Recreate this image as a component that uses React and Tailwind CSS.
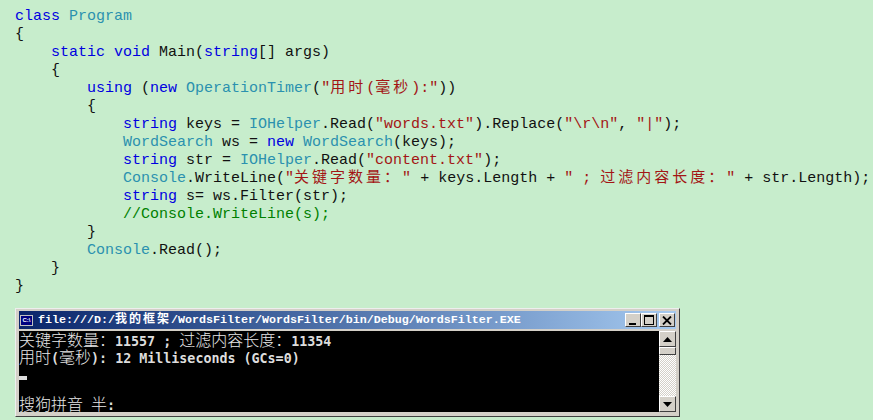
const K = ({ children }) => <span className="text-[#0000e0]">{children}</span>;
const T = ({ children }) => <span className="text-[#2b91af]">{children}</span>;
const S = ({ children }) => <span className="text-[#a31515]">{children}</span>;
const Z = ({ children }) => (
  <span className="text-[#a31515] text-[15px] leading-[0] tracking-[3px] font-['Noto_Sans_CJK_SC',sans-serif]">{children}</span>
);
const C = ({ children }) => (
  <span className="text-[16px] leading-[0] font-light text-[#e8e8e8] font-['Noto_Sans_CJK_SC',sans-serif]">{children}</span>
);
const Line = ({ children }) => <div className="h-[18px] leading-[18px] whitespace-pre">{children}</div>;

const WinBtn = ({ children, className = "" }) => (
  <div className={"w-4 h-[14px] flex items-center justify-center bg-[#d4d0c8] border border-t-white border-l-white border-r-[#404040] border-b-[#404040] " + className}>
    {children}
  </div>
);

const ScrollBtn = ({ up }) => (
  <div className="h-4 flex items-center justify-center bg-[#d4d0c8] border border-t-white border-l-white border-r-[#404040] border-b-[#404040]">
    <svg width="9" height="5" viewBox="0 0 9 5">
      <path d={up ? "M4.5 0 L9 5 L0 5 Z" : "M0 0 L9 0 L4.5 5 Z"} fill="#000" />
    </svg>
  </div>
);

export default function App() {
  return (
    <div className="w-[873px] h-[420px] overflow-hidden bg-[#c7edcc] pt-2 font-['Liberation_Mono',monospace] text-[15px] text-[#111111]">
      <div className="pl-[15px]">
        <Line><K>class</K> <T>Program</T></Line>
        <Line>{"{"}</Line>
        <Line>{"    "}<K>static</K> <K>void</K> Main(<K>string</K>[] args)</Line>
        <Line>{"    {"}</Line>
        <Line>{"        "}<K>using</K> (<K>new</K> <T>OperationTimer</T>(<S>"</S><Z>用时</Z><S>(</S><Z>毫秒</Z><S>):"</S>))</Line>
        <Line>{"        {"}</Line>
        <Line>{"            "}<K>string</K> keys = <T>IOHelper</T>.Read(<S>"words.txt"</S>).Replace(<S>"\r\n"</S>, <S>"|"</S>);</Line>
        <Line>{"            "}<T>WordSearch</T> ws = <K>new</K> <T>WordSearch</T>(keys);</Line>
        <Line>{"            "}<K>string</K> str = <T>IOHelper</T>.Read(<S>"content.txt"</S>);</Line>
        <Line>{"            "}<T>Console</T>.WriteLine(<S>"</S><Z>关键字数量：</Z><S>"</S> + keys.Length + <S>" ; </S><Z>过滤内容长度：</Z><S>"</S> + str.Length);</Line>
        <Line>{"            "}<K>string</K> s= ws.Filter(str);</Line>
        <Line>{"            "}<span className="text-[#008000]">//Console.WriteLine(s);</span></Line>
        <Line>{"        }"}</Line>
        <Line>{"        "}<T>Console</T>.Read();</Line>
        <Line>{"    }"}</Line>
        <Line>{"}"}</Line>
      </div>

      <div className="ml-[15px] mt-3 w-[665px] h-[109px] pt-[2px] px-[3px] pb-1 bg-[#d4d0c8] border border-t-[#eeeeee] border-l-[#eeeeee] border-r-[#404040] border-b-[#404040] flex flex-col">
        <div className="h-[18px] shrink-0 flex items-center pl-px pr-px bg-gradient-to-r from-[#0a246a] to-[#a6caf0]">
          <div className="w-[13px] h-[11px] bg-[#000080] border border-[#c0c0c0] flex items-center justify-center overflow-hidden">
            <span className="text-white text-[6px] leading-none font-bold font-['Liberation_Sans',sans-serif]">C:\</span>
          </div>
          <div className="ml-[5px] flex-1 whitespace-pre text-white font-bold text-[11.67px] leading-[18px]">
            file:///D:/<span className="text-[12px] leading-[0] tracking-[2px] font-['Noto_Sans_CJK_SC',sans-serif]">我的框架</span>/WordsFilter/WordsFilter/bin/Debug/WordsFilter.EXE
          </div>
          <WinBtn>
            <div className="w-[7px] h-[2px] bg-black mt-[7px] mr-[2px]"></div>
          </WinBtn>
          <WinBtn>
            <div className="w-[10px] h-[10px] border border-t-2 border-black"></div>
          </WinBtn>
          <WinBtn className="ml-[2px]">
            <svg width="10" height="9" viewBox="0 0 10 9">
              <path d="M1 0.5 L9 8.5 M9 0.5 L1 8.5" stroke="#000" strokeWidth="1.8" fill="none" />
            </svg>
          </WinBtn>
        </div>
        <div className="mt-[2px] flex-1 flex min-h-0">
          <div className="flex-1 pt-[2px] bg-black text-[#dddddd] font-['DejaVu_Sans_Mono',monospace] font-bold text-[13.33px] overflow-hidden">
            <div className="h-[17px] leading-[17px] whitespace-pre"><C>关键字数量：</C>11557 ; <C>过滤内容长度：</C>11354</div>
            <div className="h-[17px] leading-[17px] whitespace-pre"><C>用时</C>(<C>毫秒</C>): 12 Milliseconds (GCs=0)</div>
            <div className="mt-[9px] w-2 h-1 bg-[#dddddd]"></div>
            <div className="mt-[17px] h-[17px] leading-[17px] whitespace-pre"><C>搜狗拼音</C> <C>半</C>:</div>
          </div>
          <div className="w-[17px] shrink-0 flex flex-col bg-[#e8e5df] bg-[repeating-conic-gradient(#d4d0c8_0_25%,#ffffff_0_50%)] bg-[length:2px_2px]">
            <ScrollBtn up />
            <div className="h-2 bg-[#d4d0c8] border border-t-white border-l-white border-r-[#404040] border-b-[#404040]"></div>
            <div className="flex-1"></div>
            <ScrollBtn />
          </div>
        </div>
      </div>
    </div>
  );
}
